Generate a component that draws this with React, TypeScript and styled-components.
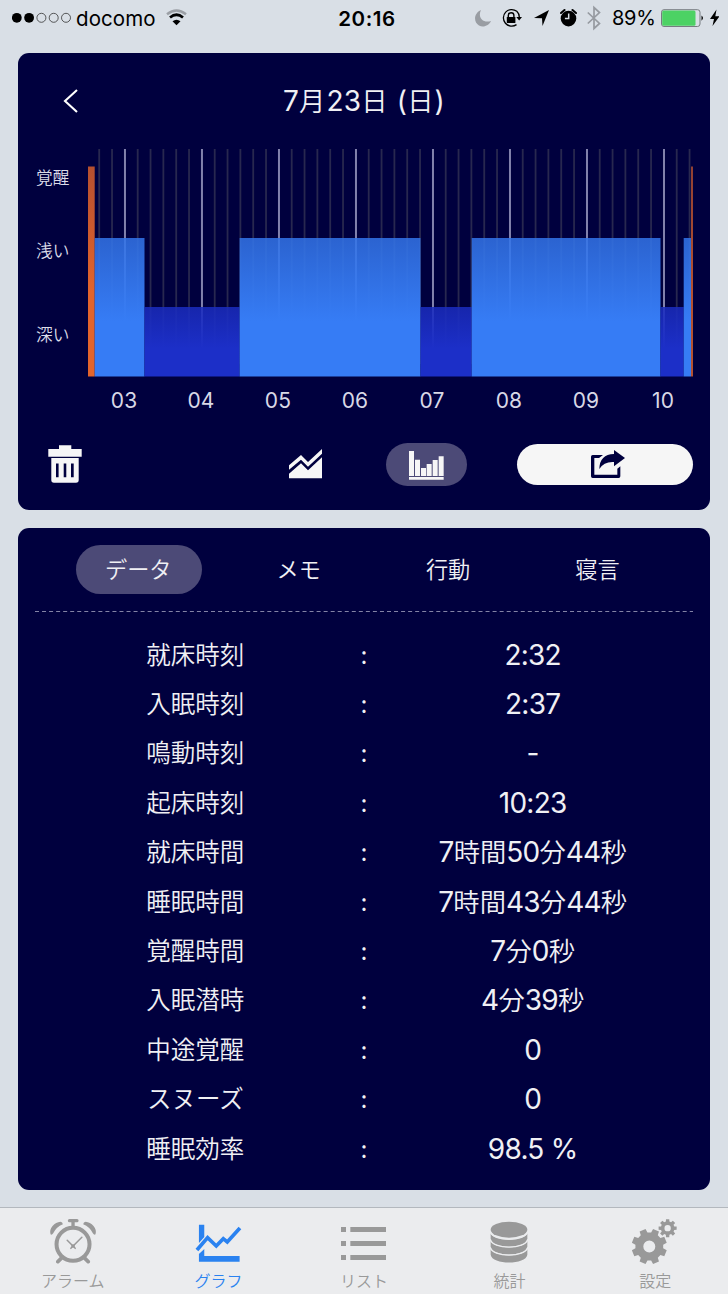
import React from "react";
import styled, { createGlobalStyle, css } from "styled-components";

const NAVY = "#00003e";
const GRAY = "#999999";
const BLUE = "#2a82f0";

const GlobalStyle = createGlobalStyle`
  * { box-sizing: border-box; }
  body {
    margin: 0;
    background: #d9dfe6;
    font-family: Inter, "Noto Sans CJK JP", sans-serif;
  }
  svg { display: block; flex: none; }
`;

const Screen = styled.div`
  width: 728px;
  height: 1294px;
  display: flex;
  flex-direction: column;
  background: #d9dfe6;
  overflow: hidden;
`;

const StatusBar = styled.header`
  height: 37px;
  flex: none;
  display: grid;
  grid-template-columns: 300px 134px 294px;
  align-items: center;
  color: #000;
  font-size: 21px;
  line-height: 37px;
  white-space: nowrap;
`;

const StatusGroup = styled.div<{ $end?: boolean }>`
  display: flex;
  align-items: center;
  height: 37px;
  ${(p) => (p.$end ? css`justify-content: flex-end; padding-right: 9px;` : css`padding-left: 12px;`)}
`;

const Carrier = styled.span`
  margin: 0 11px 0 4px;
  width: 79px;
  font-size: 20.5px;
  letter-spacing: 0.1px;
`;

const Clock = styled.span`
  text-align: center;
  font-weight: 600;
  font-size: 20.5px;
  letter-spacing: 0.6px;
`;

const Percent = styled.span`
  width: 42px;
  margin: 0 7px 0 11px;
  font-size: 20px;
  letter-spacing: -0.3px;
`;

const StatusIcon = styled.svg<{ $gap?: number }>`
  margin-left: ${(p) => p.$gap ?? 0}px;
`;

const Card = styled.section<{ $height: number }>`
  width: 692px;
  height: ${(p) => p.$height}px;
  flex: none;
  margin: 0 18px;
  border-radius: 11px;
  background: ${NAVY};
  color: #f0f0f4;
`;

const ChartCard = styled(Card)`
  margin-top: 16px;
  margin-bottom: 18px;
`;

const DateHeader = styled.div`
  height: 96px;
  display: grid;
  grid-template-columns: 100px 1fr 100px;
  align-items: center;
`;

const BackButton = styled.button`
  border: 0;
  padding: 0 0 0 45px;
  background: none;
`;

const Latin = styled.span`
  font-size: 28px;
  font-weight: 390;
  letter-spacing: -0.75px;
`;

const Kanji = styled.span`
  font-size: 26.3px;
  font-weight: 350;
`;

const DateTitle = styled.h1`
  margin: 0;
  text-align: center;
  font-size: 26px;
  line-height: 40px;
  font-weight: 350;
  letter-spacing: 1.1px;

  ${Latin} {
    letter-spacing: 0.2px;
  }
`;

const ChartRow = styled.div`
  display: flex;
  height: 228px;
`;

const DepthLabels = styled.div`
  width: 70px;
  padding: 17px 0 0 18px;
  font-size: 16.7px;
  font-weight: 350;
  line-height: 24px;
  color: #dcdce8;
`;

const DepthLabel = styled.div<{ $after: number }>`
  margin-bottom: ${(p) => p.$after}px;
`;

const Hours = styled.div`
  display: grid;
  grid-template-columns: repeat(8, 77px);
  margin-left: 67.5px;
  height: 46px;
  line-height: 48px;
  text-align: center;
  font-size: 21px;
  font-weight: 370;
  letter-spacing: 0.2px;
  color: #d8d8e6;
`;

const Toolbar = styled.div`
  display: flex;
  align-items: center;
  height: 43px;
  margin-top: 20px;
  padding-left: 30px;
`;

const IconButton = styled.button<{ $before?: number }>`
  border: 0;
  padding: 0;
  background: none;
  margin-left: ${(p) => p.$before ?? 0}px;
`;

const PillButton = styled(IconButton)<{ $w: number; $h: number; $light?: boolean }>`
  width: ${(p) => p.$w}px;
  height: ${(p) => p.$h}px;
  display: flex;
  align-items: center;
  justify-content: center;
  border-radius: 22px;
  padding: ${(p) => (p.$light ? "0 0 1px 5px" : "2px 0 0")};
  background: ${(p) => (p.$light ? "#f6f6f6" : "#4c4a77")};
`;

const DetailTabs = styled.nav`
  display: flex;
  gap: 46px;
  margin: 0 18px;
  padding: 17px 0 0 40px;
  height: 83px;
`;

const DetailTab = styled.button<{ $active?: boolean }>`
  height: 49px;
  padding: 0 30px 0 29px;
  border: 0;
  border-radius: 25px;
  background: ${(p) => (p.$active ? "#4c4a77" : "none")};
  color: #f0f0f4;
  font: 350 22.2px/47px Inter, "Noto Sans CJK JP", sans-serif;
  white-space: nowrap;
`;

const Divider = styled.svg`
  margin: 0 17px;
`;

const DataList = styled.dl`
  margin: 18.7px 93px 0;
`;

const DataRow = styled.div`
  display: grid;
  grid-template-columns: repeat(3, minmax(0, 1fr));
  justify-items: center;
  height: 49.4px;
  line-height: 49.4px;
  text-align: center;
  white-space: nowrap;
`;

const Label = styled.dt`
  font-size: 24.5px;
  font-weight: 350;
`;

const Colon = styled.span`
  font-size: 24px;
`;

const Value = styled.dd`
  margin: 0;
`;

const TabBar = styled.nav`
  margin-top: auto;
  height: 87px;
  flex: none;
  display: grid;
  grid-template-columns: repeat(5, 1fr);
  border-top: 1px solid #b3b8be;
  background: #ebecee;
`;

const TabItem = styled.a<{ $active?: boolean }>`
  display: flex;
  flex-direction: column;
  align-items: center;
  padding-top: 10px;
  color: ${(p) => (p.$active ? BLUE : GRAY)};
  font-size: 16px;
  line-height: 24px;
`;

const TabLabel = styled.span`
  margin-top: 5px;
  font-weight: 350;
`;

type Stage = "wake" | "light" | "deep";
const stages: { from: number; to: number; stage: Stage; faint?: boolean }[] = [
  { from: 0, to: 6.7, stage: "wake" },
  { from: 6.7, to: 56.5, stage: "light" },
  { from: 56.5, to: 151.6, stage: "deep" },
  { from: 151.6, to: 332.5, stage: "light" },
  { from: 332.5, to: 383.7, stage: "deep" },
  { from: 383.7, to: 572.5, stage: "light" },
  { from: 572.5, to: 595.7, stage: "deep" },
  { from: 595.7, to: 603, stage: "light" },
  { from: 603, to: 605, stage: "wake", faint: true },
];
const tops: Record<Stage, number> = { wake: 17.5, light: 89, deep: 158 };
const colors: Record<Stage, string> = { wake: "#e2642c", light: "#367cf5", deep: "#1c2fc8" };

function SleepChart() {
  return (
    <svg width="606" height="228" viewBox="0 0 606 228">
      <defs>
        {(Object.keys(colors) as Stage[]).map((s) => (
          <linearGradient key={s} id={s} x1="0" y1="0" x2="0" y2="1">
            <stop offset="0" stopColor={colors[s]} stopOpacity="0.8" />
            <stop offset="0.6" stopColor={colors[s]} />
          </linearGradient>
        ))}
      </defs>
      {Array.from({ length: 47 }, (_, i) => {
        const hour = i % 6 === 2;
        return (
          <rect
            key={i}
            x={10.3 + i * 12.834}
            y="0"
            width={hour ? 2 : 1.8}
            height="215"
            fill={hour ? "#8282ac" : "#28284f"}
          />
        );
      })}
      {stages.map((b) => (
        <rect key={b.from} x={b.from} y={tops[b.stage]} width={b.to - b.from} height={227.5 - tops[b.stage]} fill={NAVY} opacity="0.3" />
      ))}
      {stages.map((b) => (
        <rect key={b.from} x={b.from} y={tops[b.stage]} width={b.to - b.from} height={227.5 - tops[b.stage]} fill={`url(#${b.stage})`} opacity={b.faint ? 0.8 : 1} />
      ))}
    </svg>
  );
}

function gearPath(cx: number, cy: number, outer: number, inner: number, hole: number, turn: number) {
  const teeth = 8;
  const pts: string[] = [];
  for (let i = 0; i < teeth; i++) {
    const a = ((i + turn) / teeth) * Math.PI * 2;
    const corners: [number, number][] = [
      [-0.33, inner],
      [-0.23, outer],
      [0.23, outer],
      [0.33, inner],
    ];
    corners.forEach(([d, r]) => {
      const t = a + (d / teeth) * Math.PI * 2;
      pts.push(`${(cx + r * Math.cos(t)).toFixed(2)} ${(cy + r * Math.sin(t)).toFixed(2)}`);
    });
  }
  return `M${pts.join("L")}ZM${cx - hole} ${cy}a${hole} ${hole} 0 1 0 ${hole * 2} 0a${hole} ${hole} 0 1 0 ${-hole * 2} 0Z`;
}

const TabIcon = ({ x, children }: { x: number; children: React.ReactNode }) => (
  <svg width="48" height="46" viewBox={`${x} 114 144 138`} fill="currentColor">
    {children}
  </svg>
);

const AlarmIcon = () => (
  <TabIcon x={146.4}>
    <circle cx="218.500" cy="193" r="49.500" fill="none" stroke="currentColor" strokeWidth="12" />
    <rect x="203" y="117" width="32" height="9.500" rx="4.500" />
    <rect x="213.500" y="122" width="10" height="20" />
    <path d="M151 163Q147 150 157 138Q167 126 181 125Q187 126 188 133Q168 141 159 160Q155 166 151 163Z" />
    <path d="M286 163Q290 150 280 138Q270 126 256 125Q250 126 249 133Q269 141 278 160Q282 166 286 163Z" />
    <path d="M183 235L173 245M254 235L264 245" stroke="currentColor" strokeWidth="11" strokeLinecap="round" />
    <path d="M201 181L225 205M245 172L212 205" stroke="currentColor" strokeWidth="4.500" strokeLinecap="round" />
    <circle cx="218.500" cy="198" r="5.500" />
  </TabIcon>
);

const GraphIcon = () => (
  <TabIcon x={583.2}>
    <path d="M598 134H614V171L598 189ZM614 207V228H720V245H598V222Z" />
    <path d="M592 210L624 173L650 198L671 176L683 186L721 144" fill="none" stroke="currentColor" strokeWidth="11" />
  </TabIcon>
);

const ListIcon = () => (
  <TabIcon x={1020}>
    {[141, 183, 225].map((y) => (
      <path key={y} d={`M1023 ${y}h15v15h-15zM1051 ${y}h107v15h-107z`} />
    ))}
  </TabIcon>
);

const DatabaseIcon = () => (
  <TabIcon x={365}>
    <ellipse cx="434" cy="149" rx="55" ry="24" />
    {[160, 183, 207].map((y) => (
      <path key={y} d={`M379 ${y}C388 ${y + 25} 480 ${y + 25} 489 ${y}V${y + 17}C485 ${y + 48} 383 ${y + 48} 379 ${y + 17}Z`} />
    ))}
    {[160, 183, 207].map((y) => (
      <path key={y} d={`M378 ${y - 5}C384 ${y + 26} 484 ${y + 26} 490 ${y - 5}`} fill="none" stroke="#ebecee" strokeWidth="4" />
    ))}
  </TabIcon>
);

const GearsIcon = () => (
  <TabIcon x={801.6}>
    <path fillRule="evenodd" d={gearPath(856.5, 199.5, 53.5, 42, 18, 0.5)} />
    <path fillRule="evenodd" d={gearPath(911.5, 144.5, 27.5, 20.5, 9.5, 0)} />
  </TabIcon>
);

/* Digits and punctuation are set larger and tighter than the kanji beside them. */
const MixedText = ({ text }: { text: string }) => (
  <>
    {(text.match(/[\x20-\x7e]+|[^\x20-\x7e]+/g) ?? []).map((run, i) =>
      /[\x20-\x7e]/.test(run) ? <Latin key={i}>{run}</Latin> : <Kanji key={i}>{run}</Kanji>
    )}
  </>
);

const rows: [string, string][] = [
  ["就床時刻", "2:32"],
  ["入眠時刻", "2:37"],
  ["鳴動時刻", "-"],
  ["起床時刻", "10:23"],
  ["就床時間", "7時間50分44秒"],
  ["睡眠時間", "7時間43分44秒"],
  ["覚醒時間", "7分0秒"],
  ["入眠潜時", "4分39秒"],
  ["中途覚醒", "0"],
  ["スヌーズ", "0"],
  ["睡眠効率", "98.5 %"],
];

export default function App() {
  return (
    <Screen>
      <GlobalStyle />
      <StatusBar>
        <StatusGroup>
          <svg width="60" height="37" viewBox="0 0 60 37">
            {[0, 1, 2, 3, 4].map((i) => (
              <circle key={i} cx={4.8 + i * 12.3} cy="17.800" r={i < 2 ? 4.9 : 4.5} fill={i < 2 ? "#000" : "none"} stroke={i < 2 ? "none" : "#333"} strokeWidth="0.800" />
            ))}
          </svg>
          <Carrier>docomo</Carrier>
          <svg width="21" height="37" viewBox="0 0 21 37" fill="none" stroke="#000" strokeWidth="2.700">
            <path d="M1 14.300Q10.500 6.500 20 14.300" stroke="#9b9fa5" strokeWidth="2.400" />
            <path d="M4 17.500Q10.500 12 17 17.500" />
            <path d="M6.500 21.300Q10.500 18 14.500 21.300L10.500 25.200Z" fill="#000" stroke="none" />
          </svg>
        </StatusGroup>
        <Clock>20:16</Clock>
        <StatusGroup $end>
          <StatusIcon width="16" height="37" viewBox="0 0 16 37" fill="#999da3">
            <path d="M6 10C-1 13-2 22 4 25.500C8.500 28 14 25.500 16 21C7.500 23.500 2.500 17 6 10Z" />
          </StatusIcon>
          <StatusIcon $gap={11.5} width="20" height="37" viewBox="0 0 20 37">
            <path d="M14.800 11.300A8.300 8.300 0 1 0 14.500 24.600M14.800 11.300A8.300 8.300 0 0 1 17.300 18" fill="none" stroke="#000" strokeWidth="1.300" />
            <path d="M14.300 17H20L17.200 20.500Z" />
            <rect x="4.800" y="17" width="8.600" height="6" rx="0.600" />
            <path d="M6.300 17.500V15.500A2.800 2.800 0 0 1 11.900 15.500V17.500" fill="none" stroke="#000" strokeWidth="1.400" />
          </StatusIcon>
          <StatusIcon $gap={11.5} width="15" height="37" viewBox="0 0 15 37">
            <path d="M15 10L8.500 26L8 18.300L0 18Z" />
          </StatusIcon>
          <StatusIcon $gap={11.5} width="17" height="37" viewBox="0 0 17 37">
            <circle cx="8.500" cy="18.600" r="7.800" />
            <path d="M1 13L4.500 10M16 13L12.500 10" stroke="#000" strokeWidth="2" strokeLinecap="round" />
            <path d="M8.700 13.500V18.600H4.900" fill="none" stroke="#d9dfe6" strokeWidth="1.500" />
          </StatusIcon>
          <StatusIcon $gap={10} width="14" height="37" viewBox="0 0 14 37">
            <path d="M0.800 12.500L12.500 23.500L7 28.500V7.500L12.500 12.500L0.800 23.500" fill="none" stroke="#969aa0" strokeWidth="1.700" />
          </StatusIcon>
          <Percent>89%</Percent>
          <svg width="43" height="37" viewBox="0 0 43 37">
            <rect x="0.500" y="9.700" width="38.500" height="16.800" rx="2.500" fill="none" stroke="#777c80" />
            <rect x="1.200" y="10.500" width="33.300" height="15.200" rx="1.500" fill="#4cd264" />
            <path d="M40.500 15.500Q43.500 18 40.500 20.700Z" />
          </svg>
          <StatusIcon $gap={5.5} width="9.500" height="37" viewBox="0 0 9.500 37">
            <path d="M6.500 9.500L0 19H4L2.500 26L9.500 16.300H5.300Z" />
          </StatusIcon>
        </StatusGroup>
      </StatusBar>

      <ChartCard $height={457}>
        <DateHeader>
          <BackButton aria-label="戻る">
            <svg width="15" height="24" viewBox="0 0 15 24">
              <path d="M14 1L2 12L14 23" fill="none" stroke="#fff" strokeWidth="2.100" />
            </svg>
          </BackButton>
          <DateTitle>
            <MixedText text="7月23日 (日)" />
          </DateTitle>
        </DateHeader>
        <ChartRow>
          <DepthLabels>
            <DepthLabel $after={49}>覚醒</DepthLabel>
            <DepthLabel $after={60}>浅い</DepthLabel>
            <DepthLabel $after={0}>深い</DepthLabel>
          </DepthLabels>
          <SleepChart />
        </ChartRow>
        <Hours>
          {["03", "04", "05", "06", "07", "08", "09", "10"].map((h) => (
            <span key={h}>{h}</span>
          ))}
        </Hours>
        <Toolbar>
          <IconButton aria-label="削除">
            <svg width="34" height="39" viewBox="0 0 34 39" fill="#f6f6f6">
              <path d="M0.300 4H11V0.300H23.300V4H33.700V11.700H0.300Z" />
              <path fillRule="evenodd" d="M3.300 13H30.700V35Q30.700 37.700 28 37.700H6Q3.300 37.700 3.300 35ZM8 18.500V32.300H10.600V18.500ZM15.700 18.500V32.300H18.300V18.500ZM23 18.500V32.300H25.700V18.500Z" />
            </svg>
          </IconButton>
          <IconButton $before={207} aria-label="折れ線">
            <svg width="33" height="31" viewBox="807 72 99 93" fill="#f6f6f6">
              <path d="M807 121L843 90L864 111L906 72V86L864 125L843 104L807 134Z" />
              <path d="M807 146L843 115L864 136L906 97V160H807Z" />
            </svg>
          </IconButton>
          <PillButton $before={64} $w={81} $h={42.5} aria-label="棒グラフ">
            <svg width="35" height="28.700" viewBox="117 78 105 86" fill="#f6f6f6">
              <path d="M117 78h15v75h-15zM135 104h15v49h-15zM153 129h15v24h-15zM170 117h15v36h-15zM188 105h15v48h-15zM206 94h15v59h-15zM117 156h104v8h-104z" />
            </svg>
          </PillButton>
          <PillButton $before={50} $w={176} $h={41.5} $light aria-label="共有">
            <svg width="34" height="28" viewBox="663 75 102 84" fill={NAVY}>
              <path d="M699 90L687 99H673V149H742V131L751 124V154Q751 159 746 159H668Q663 159 663 154V95Q663 90 668 90Z" />
              <path d="M732 75L765 99L732 124V111Q702 109 688 132Q689 88 732 87Z" />
            </svg>
          </PillButton>
        </Toolbar>
      </ChartCard>

      <Card $height={662}>
        <DetailTabs>
          <DetailTab $active>データ</DetailTab>
          <DetailTab>メモ</DetailTab>
          <DetailTab>行動</DetailTab>
          <DetailTab>寝言</DetailTab>
        </DetailTabs>
        <Divider width="658" height="1" viewBox="0 0 658 1">
          <path d="M0 .5H658" stroke="#8383a6" strokeDasharray="4 3.040" />
        </Divider>
        <DataList>
          {rows.map(([label, value]) => (
            <DataRow key={label}>
              <Label>{label}</Label>
              <Colon>:</Colon>
              <Value>
                <MixedText text={value} />
              </Value>
            </DataRow>
          ))}
        </DataList>
      </Card>

      <TabBar>
        <TabItem>
          <AlarmIcon />
          <TabLabel>アラーム</TabLabel>
        </TabItem>
        <TabItem $active>
          <GraphIcon />
          <TabLabel>グラフ</TabLabel>
        </TabItem>
        <TabItem>
          <ListIcon />
          <TabLabel>リスト</TabLabel>
        </TabItem>
        <TabItem>
          <DatabaseIcon />
          <TabLabel>統計</TabLabel>
        </TabItem>
        <TabItem>
          <GearsIcon />
          <TabLabel>設定</TabLabel>
        </TabItem>
      </TabBar>
    </Screen>
  );
}
